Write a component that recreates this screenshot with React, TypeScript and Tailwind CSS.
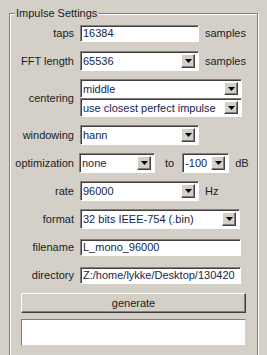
import React from 'react';

const font = "font-['Liberation_Sans',Arial,sans-serif]";

// small black down-triangle used on the combobox buttons
const Arrow: React.FC = () => (
  <svg width="7" height="4" viewBox="0 0 7 4">
    <polygon points="0,0 7,0 3.5,4" fill="#000" />
  </svg>
);

interface EntryProps {
  value: string;
  width: string;
}

const Entry: React.FC<EntryProps> = ({ value, width }) => (
  <div
    className={`${width} h-[17px] shrink-0 bg-white border border-t-[#808080] border-l-[#808080] border-r-white border-b-white shadow-[inset_1px_1px_0_#404040] flex items-center pl-[2px] overflow-hidden whitespace-nowrap text-[#16264a]`}
  >
    {value}
  </div>
);

interface ComboProps {
  value: string;
  width: string;
  height?: string;
}

const Combo: React.FC<ComboProps> = ({ value, width, height = 'h-[20px]' }) => (
  <div
    className={`${width} ${height} shrink-0 bg-white border border-t-[#808080] border-l-[#808080] border-r-white border-b-white shadow-[inset_1px_1px_0_#404040] flex items-center pl-[2px] pr-[3px] py-[2px]`}
  >
    <span className="flex-1 overflow-hidden whitespace-nowrap text-[#16264a]">{value}</span>
    <div className="w-[14px] h-full bg-[#d4d0c8] border border-t-white border-l-white border-r-[#404040] border-b-[#404040] shadow-[inset_-1px_-1px_0_#808080] flex items-center justify-center">
      <Arrow />
    </div>
  </div>
);

const Label: React.FC<{ children: React.ReactNode }> = ({ children }) => (
  <div className="w-[59px] shrink-0 text-right whitespace-nowrap text-[#1b1b24] mr-[6px]">{children}</div>
);

const Row: React.FC<{ children: React.ReactNode; tall?: boolean }> = ({ children, tall }) => (
  <div className={`flex items-center ${tall ? 'h-[38px]' : 'h-[20px]'}`}>{children}</div>
);

export default function App() {
  return (
    <div className={`w-[267px] h-[355px] overflow-hidden bg-[#d4d0c8] text-[11px] leading-[14px] ${font}`}>
      <div className="relative ml-[9px] mt-[13px] w-[249px] h-[360px] border border-[#808080] shadow-[inset_1px_1px_0_white,1px_1px_0_white] pl-[5px] pt-[9px]">
        <span className="absolute left-[5px] top-[-8px] px-[1px] bg-[#d4d0c8] text-[#1b1b24]">Impulse Settings</span>

        <div className="flex flex-col gap-[8px]">
          <Row>
            <Label>taps</Label>
            <Entry value="16384" width="w-[119px]" />
            <span className="ml-[6px] text-[#1b1b24]">samples</span>
          </Row>

          <Row>
            <Label>FFT length</Label>
            <Combo value="65536" width="w-[119px]" />
            <span className="ml-[6px] text-[#1b1b24]">samples</span>
          </Row>

          <Row tall>
            <Label>centering</Label>
            <div className="flex flex-col">
              <Combo value="middle" width="w-[162px]" height="h-[19px]" />
              <Combo value="use closest perfect impulse" width="w-[162px]" height="h-[19px]" />
            </div>
          </Row>

          <Row>
            <Label>windowing</Label>
            <Combo value="hann" width="w-[119px]" />
          </Row>

          <Row>
            <Label>optimization</Label>
            <div className="-ml-[1px] flex items-center">
              <Combo value="none" width="w-[76px]" />
              <span className="ml-[10px] text-[#1b1b24]">to</span>
              <div className="ml-[8px]">
                <Combo value="-100" width="w-[47px]" />
              </div>
              <span className="ml-[6px] text-[#1b1b24]">dB</span>
            </div>
          </Row>

          <Row>
            <Label>rate</Label>
            <Combo value="96000" width="w-[119px]" />
            <span className="ml-[6px] text-[#1b1b24]">Hz</span>
          </Row>

          <Row>
            <Label>format</Label>
            <Combo value="32 bits IEEE-754 (.bin)" width="w-[160px]" />
          </Row>

          <Row>
            <Label>filename</Label>
            <Entry value="L_mono_96000" width="w-[161px]" />
          </Row>

          <Row>
            <Label>directory</Label>
            <Entry value="Z:/home/lykke/Desktop/130420" width="w-[161px]" />
          </Row>

          <div className="ml-[6px] w-[225px] h-[20px] bg-[#d4d0c8] border border-t-white border-l-white border-r-[#404040] border-b-[#404040] shadow-[inset_-1px_-1px_0_#808080] flex items-center justify-center text-[#1b1b24]">
            generate
          </div>
        </div>

        <div className="ml-[6px] mt-[6px] w-[225px] h-[27px] bg-white border border-t-[#808080] border-l-[#808080] border-r-[#d4d0c8] border-b-[#d4d0c8]" />
      </div>
    </div>
  );
}
